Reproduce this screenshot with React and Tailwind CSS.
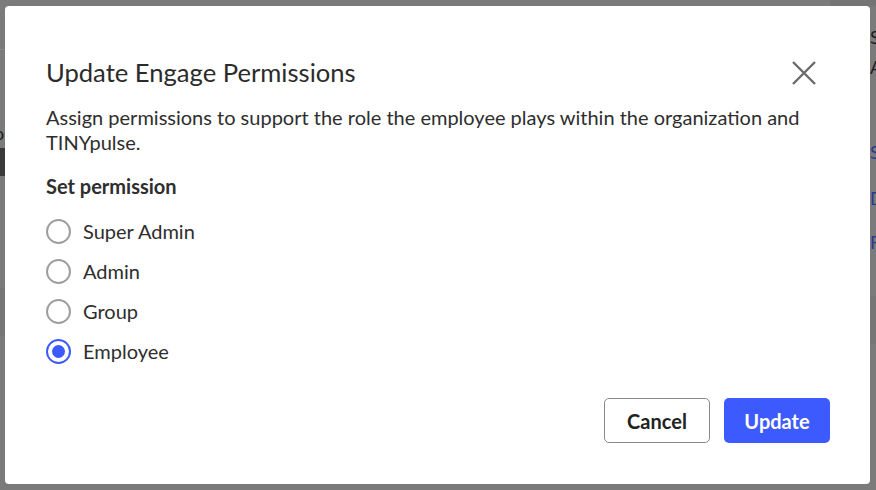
import React, { useState } from "react";

const options = ["Super Admin", "Admin", "Group", "Employee"];

const PermissionsModal = () => {
  const [selected, setSelected] = useState("Employee");

  return (
    <div className="flex h-[478px] w-[865px] flex-col rounded-[4px] bg-white pl-[41px] pr-[40px] pt-[50px] pb-[41px] text-[#333333]">
      <div className="flex items-start justify-between">
        <h2 className="text-[25.6px] leading-[32px] text-[#2b2b2b]">Update Engage Permissions</h2>
        <button className="mr-[14px] mt-[5px] text-[#6b6b6b]">
          <svg width="24" height="24" viewBox="0 0 24 24" fill="none" stroke="currentColor" strokeWidth={2.4}>
            <path d="M1 1 L23 23 M23 1 L1 23" />
          </svg>
        </button>
      </div>

      <p className="mt-[17px] pr-[20px] text-[20px] leading-[25px] text-[#2e2e2e]">
        Assign permissions to support the role the employee plays within the organization and TINYpulse.
      </p>

      <div className="mt-[19px] text-[20px] font-bold leading-[24px] text-[#2e2e2e]">Set permission</div>

      <div className="mt-[13px] flex flex-col">
        {options.map((opt) => (
          <label key={opt} className="flex h-[40px] cursor-pointer items-center gap-[12px]" onClick={() => setSelected(opt)}>
            <span
              className={
                selected === opt
                  ? "flex h-[25px] w-[25px] items-center justify-center rounded-full border-2 border-[#3d5afe]"
                  : "flex h-[25px] w-[25px] items-center justify-center rounded-full border-2 border-[#9e9e9e]"
              }
            >
              {selected === opt && <span className="h-[13px] w-[13px] rounded-full bg-[#3d5afe]" />}
            </span>
            <span className="text-[20px] text-[#2e2e2e]">{opt}</span>
          </label>
        ))}
      </div>

      <div className="mt-auto flex justify-end gap-[14px]">
        <button className="h-[45px] w-[106px] rounded-[5px] border border-[#8a8a8a] bg-white text-[20px] font-bold text-[#222222]">
          Cancel
        </button>
        <button className="h-[45px] w-[106px] rounded-[5px] bg-[#3d5afe] text-[20px] font-bold text-white">
          Update
        </button>
      </div>
    </div>
  );
};

export default function App() {
  return (
    <div className="relative h-[490px] w-[876px] overflow-hidden bg-[#7b7b7b] font-['Lato',sans-serif]">
      {/* page behind the overlay */}
      <div className="absolute left-0 top-[49px] h-px w-[6px] bg-[#8a8a8a]" />
      <div className="absolute left-[-6px] top-[120px] text-[18px] text-[#1e1e1e]">o</div>
      <div className="absolute left-0 top-[148px] h-[28px] w-[6px] bg-[#3a3a3a]" />
      <div className="absolute left-0 top-[288px] h-[48px] w-[6px] bg-[#767676]" />
      <div className="absolute left-[830px] top-0 h-[6px] w-[46px] bg-[#747474]" />
      <div className="absolute left-[870px] top-[25px] text-[18px] leading-[24px] text-[#1e1e1e]">S</div>
      <div className="absolute left-[870px] top-[55px] text-[18px] leading-[24px] text-[#1e1e1e]">A</div>
      <div className="absolute left-[870px] top-[140px] text-[18px] leading-[24px] text-[#2a3a8f]">S</div>
      <div className="absolute left-[870px] top-[186px] text-[18px] leading-[24px] text-[#2a3a8f]">D</div>
      <div className="absolute left-[870px] top-[230px] text-[18px] leading-[24px] text-[#2a3a8f]">F</div>
      <div className="absolute left-[870px] top-[296px] h-[48px] w-[6px] bg-[#767676]" />

      <div className="relative pl-[5px] pt-[6px]">
        <PermissionsModal />
      </div>
    </div>
  );
}
